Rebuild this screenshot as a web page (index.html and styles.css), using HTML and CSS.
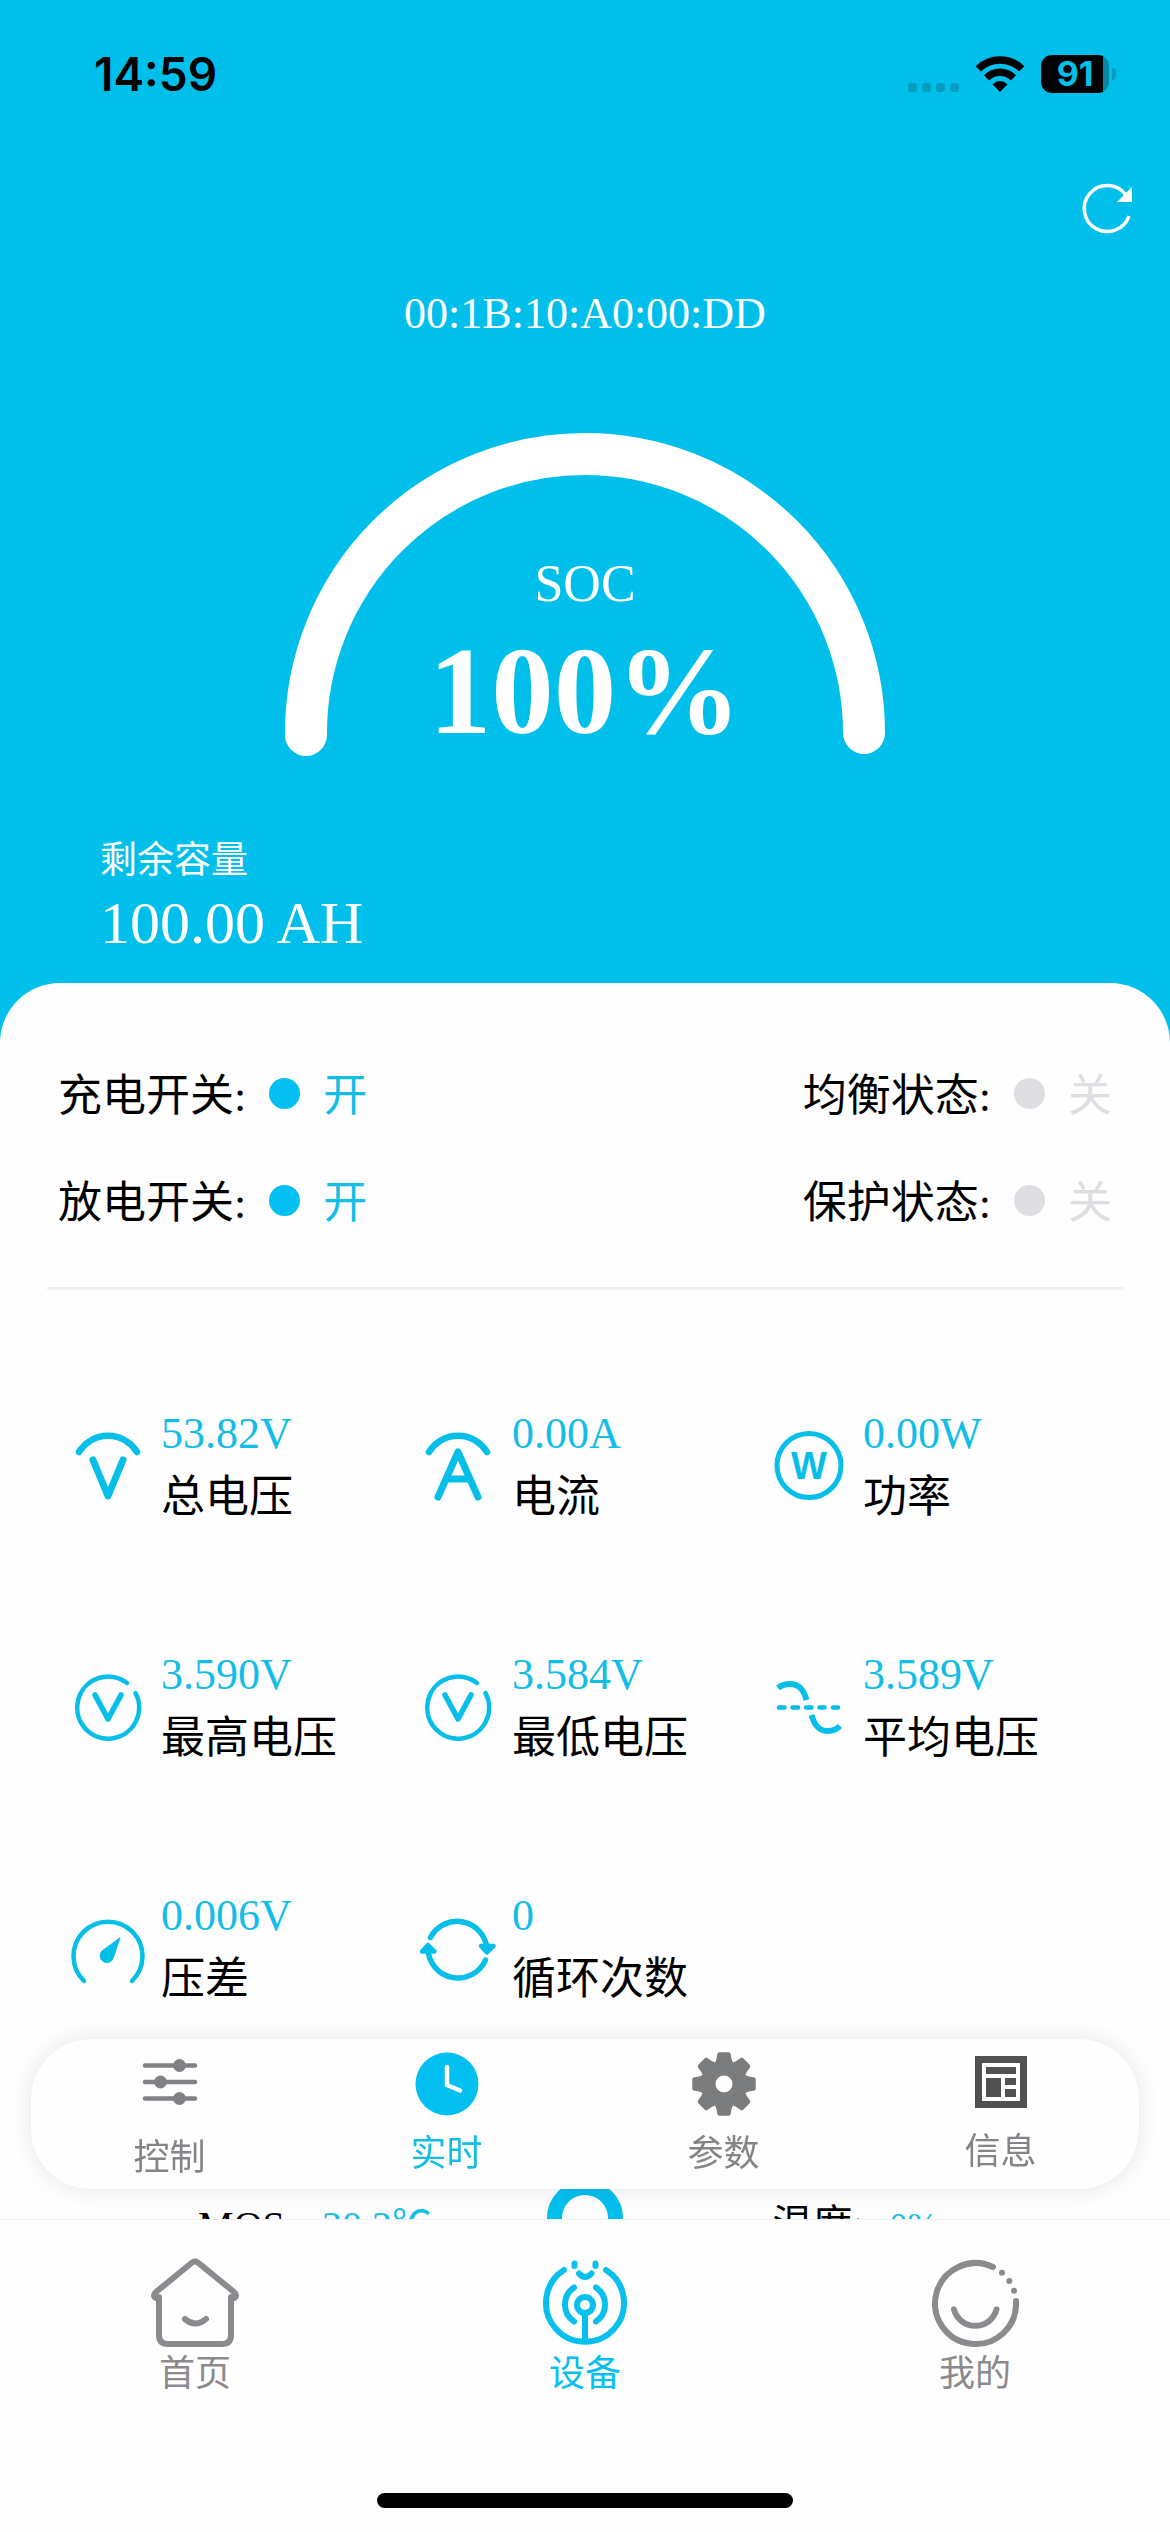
FILE: index.html
```html
<!DOCTYPE html>
<html lang="zh-CN">
<head>
<meta charset="utf-8">
<meta name="viewport" content="width=device-width, initial-scale=1">
<title>设备</title>
<link rel="stylesheet" href="styles.css">
</head>
<body>
<div class="app">
  <div class="screen">
    <main class="content">
      <header class="hero">
        <div class="statusbar">
          <span class="clock">14:59</span>
          <div class="status-icons">
            <svg class="signal" width="51" height="36" viewBox="0 0 51 36" aria-hidden="true">
              <g fill="#0a9bc2"><rect y="27" width="9" height="9" rx="3"/><rect x="14" y="27" width="9" height="9" rx="3"/><rect x="28" y="27" width="9" height="9" rx="3"/><rect x="42" y="27" width="9" height="9" rx="3"/></g>
            </svg>
            <svg width="48" height="36" viewBox="0 0 48 36" aria-hidden="true">
              <g fill="none" stroke="#000" stroke-width="7.4">
                <path d="M2.3 12.8A31 31 0 0 1 45.7 12.8"/>
                <path d="M10.6 21.8A19 19 0 0 1 37.4 21.8"/>
              </g>
              <path d="M24 36L16.5 28.3Q24 21.5 31.500 28.3Z"/>
            </svg>
            <div class="battery"><span>91</span></div>
          </div>
        </div>
        <button class="refresh" type="button" aria-label="刷新">
          <svg width="60" height="60" viewBox="0 0 60 60" aria-hidden="true">
            <path d="M51 39A23 23 0 1 1 47.500 17.500" fill="none" stroke="#fff" stroke-width="3.500"/>
            <path d="M54 10V25H39Z" fill="#fff"/>
          </svg>
        </button>
        <h1 class="device-id">00:1B:10:A0:00:DD</h1>
        <div class="gauge">
          <svg class="gauge-arc" width="602" height="329" viewBox="0 0 602 329" aria-hidden="true">
            <path d="M22 303V301A279 279 0 0 1 580 301" fill="none" stroke="#fff" stroke-width="42" stroke-linecap="round"/>
          </svg>
          <div class="gauge-text">
            <span class="gauge-label">SOC</span>
            <strong class="gauge-value">100%</strong>
          </div>
        </div>
        <div class="capacity">
          <span class="capacity-label">剩余容量</span>
          <span class="capacity-value">100.00 AH</span>
        </div>
      </header>

      <section class="sheet">
        <div class="switches">
          <div class="switch-row">
            <div class="switch on"><span class="name">充电开关:</span><i class="dot"></i><span class="state">开</span></div>
            <div class="switch"><span class="name">均衡状态:</span><i class="dot"></i><span class="state">关</span></div>
          </div>
          <div class="switch-row">
            <div class="switch on"><span class="name">放电开关:</span><i class="dot"></i><span class="state">开</span></div>
            <div class="switch"><span class="name">保护状态:</span><i class="dot"></i><span class="state">关</span></div>
          </div>
        </div>
        <hr class="divider">
        <div class="stats">
          <div class="stat">
            <svg class="stat-icon" viewBox="0 0 80 80" aria-hidden="true"><path d="M12 26A34 34 0 0 1 70 26" stroke-width="6.500"/><path d="M26 34L41 70L56 34" stroke-width="7"/></svg>
            <div class="stat-text"><span class="value">53.82V</span><span class="label">总电压</span></div>
          </div>
          <div class="stat">
            <svg class="stat-icon" viewBox="0 0 80 80" aria-hidden="true"><path d="M11 26A34 34 0 0 1 69 26" stroke-width="6.500"/><path d="M20 71L40 26L60 71M28 53H52" stroke-width="7"/></svg>
            <div class="stat-text"><span class="value">0.00A</span><span class="label">电流</span></div>
          </div>
          <div class="stat">
            <svg class="stat-icon" viewBox="0 0 80 80" aria-hidden="true"><circle cx="40" cy="39.500" r="32" stroke-width="5"/><text class="icon-letter" x="40" y="53" text-anchor="middle">W</text></svg>
            <div class="stat-text"><span class="value">0.00W</span><span class="label">功率</span></div>
          </div>
          <div class="stat">
            <svg class="stat-icon" viewBox="0 0 80 80" aria-hidden="true"><path d="M60 16A31 31 0 1 0 68.500 26" stroke-width="4.500"/><path d="M28 28L41 52L54 28" stroke-width="5.500"/></svg>
            <div class="stat-text"><span class="value">3.590V</span><span class="label">最高电压</span></div>
          </div>
          <div class="stat">
            <svg class="stat-icon" viewBox="0 0 80 80" aria-hidden="true"><path d="M59 16A31 31 0 1 0 67.500 26" stroke-width="4.500"/><path d="M27 28L40 52L53 28" stroke-width="5.500"/></svg>
            <div class="stat-text"><span class="value">3.584V</span><span class="label">最低电压</span></div>
          </div>
          <div class="stat">
            <svg class="stat-icon" viewBox="0 0 80 80" aria-hidden="true"><path class="flat" d="M9 21Q14 17 21 17C31 17 35 24 37.500 33M42.500 48C45 57 49 64 59 64Q66 64 71 59" stroke-width="6"/><path d="M10 40.500H15.500M23.500 40.500H29M37 40.500H42.500M50.500 40.500H55.500M64 40.500H69" stroke-width="4.500"/></svg>
            <div class="stat-text"><span class="value">3.589V</span><span class="label">平均电压</span></div>
          </div>
          <div class="stat">
            <svg class="stat-icon" viewBox="0 0 80 80" aria-hidden="true"><path d="M17 73A34.500 34.500 0 1 1 65 73" stroke-width="4.500"/><path class="solid" d="M53 30L46.500 49A6.800 6.800 0 1 1 34.500 43.500Z" stroke-width="1"/></svg>
            <div class="stat-text"><span class="value">0.006V</span><span class="label">压差</span></div>
          </div>
          <div class="stat">
            <svg class="stat-icon" viewBox="0 0 80 80" aria-hidden="true"><path d="M12.500 29.500A30 30 0 0 1 69 41M67.500 52A30 30 0 0 1 10 40" stroke-width="5.500"/><path class="solid" d="M63 38H75.500L69 44.500Z" stroke-width="4.500"/><path class="solid" d="M4 43.500L10 37L16.500 43.500Z" stroke-width="4.500"/></svg>
            <div class="stat-text"><span class="value">0</span><span class="label">循环次数</span></div>
          </div>
        </div>
        <div class="temps">
          <div class="temp"><span>MOS:</span><span class="temp-value">30.2℃</span></div>
          <svg width="76" height="76" viewBox="0 0 76 76" aria-hidden="true"><circle cx="38" cy="38" r="30.500" fill="none" stroke="#00c0eb" stroke-width="15"/></svg>
          <div class="temp"><span>温度:</span><span class="temp-value small">0%</span></div>
        </div>
      </section>
    </main>

    <nav class="tabs" aria-label="设备页面">
      <button class="tab" type="button">
        <svg width="64" height="68" viewBox="0 0 64 68" aria-hidden="true"><path d="M7 13.500H57M7 30H57M7 46.500H57" stroke="#828084" stroke-width="4.500" stroke-linecap="round"/><g fill="#828084"><circle cx="41.500" cy="13.500" r="6.400"/><circle cx="22.500" cy="30" r="6.400"/><circle cx="41.500" cy="46.500" r="6.400"/></g></svg>
        <span>控制</span>
      </button>
      <button class="tab active" type="button">
        <svg width="64" height="64" viewBox="0 0 64 64" aria-hidden="true"><circle cx="32" cy="32" r="31.500" fill="#04c0f0"/><path d="M32 15V33L45 38.500" fill="none" stroke="#fff" stroke-width="4.500" stroke-linecap="round" stroke-linejoin="round"/></svg>
        <span>实时</span>
      </button>
      <button class="tab" type="button">
        <svg width="64" height="64" viewBox="0 0 64 64" aria-hidden="true">
          <defs><path id="tooth" d="M-7 -20Q-5 -24 -4.500 -29.500H4.500Q5 -24 7 -20Z"/></defs>
          <g transform="translate(32 32)" fill="#7a7c7e" stroke="#7a7c7e" stroke-width="4.500" stroke-linejoin="round">
            <use href="#tooth"/><use href="#tooth" transform="rotate(45)"/><use href="#tooth" transform="rotate(90)"/><use href="#tooth" transform="rotate(135)"/><use href="#tooth" transform="rotate(180)"/><use href="#tooth" transform="rotate(225)"/><use href="#tooth" transform="rotate(270)"/><use href="#tooth" transform="rotate(315)"/>
            <circle r="15.500" fill="none" stroke-width="14"/>
          </g>
        </svg>
        <span>参数</span>
      </button>
      <button class="tab" type="button">
        <svg width="62" height="62" viewBox="0 0 62 62" aria-hidden="true"><rect x="5" y="4" width="52" height="52" fill="#525053"/><rect x="12" y="11" width="38" height="38" fill="#fff"/><g fill="#525053"><rect x="16" y="15" width="30" height="7"/><rect x="16" y="26" width="15" height="19"/><rect x="35" y="26" width="11" height="7"/><rect x="35" y="37" width="11" height="8"/></g></svg>
        <span>信息</span>
      </button>
    </nav>
  </div>

  <footer class="bottom">
    <nav class="bottom-nav" aria-label="主导航">
      <a class="nav-item" href="#home">
        <svg viewBox="0 0 96 96" aria-hidden="true"><path d="M12 43.500C6 43.500 6 39.500 9 37L44.500 8Q48 5 51.500 8L87 37C90 39.500 90 43.500 84 43.500"/><path d="M12 42V80Q12 89 21 89H75Q84 89 84 80V42"/><path d="M38 64Q48 73 59 64"/></svg>
        <span>首页</span>
      </a>
      <a class="nav-item active" href="#device">
        <svg viewBox="0 0 96 96" aria-hidden="true"><path d="M27 15A39 39 0 1 0 69 15"/><path d="M37.500 8.500V11M58.500 8.500V11M42 18.500Q48 25.500 54.500 18.500"/><path d="M37 32.500A20.500 20.500 0 0 0 37 66.500M59 32.500A20.500 20.500 0 0 1 59 66.500"/><circle cx="48" cy="50" r="8"/><path d="M48 58V86"/></svg>
        <span>设备</span>
      </a>
      <a class="nav-item" href="#mine">
        <svg viewBox="0 0 96 96" aria-hidden="true"><path d="M66 12A40.500 40.500 0 1 0 89 46"/><path d="M27 54.500A22 22 0 0 0 69.500 54.500"/><path d="M75 17.700h.01M82.300 26h.01M87 35.700h.01"/></svg>
        <span>我的</span>
      </a>
    </nav>
    <div class="home-indicator"></div>
  </footer>
</div>
</body>
</html>
```
FILE: styles.css
```css
:root {
  --cyan: #00c0eb;
  --cyan-text: #12bde6;
  --gray: #858387;
  --light: #dedde1;
}

* {
  box-sizing: border-box;
}

body {
  margin: 0;
  background: #fefefe;
  color: #000;
  font-family: "Liberation Serif", "Noto Sans CJK SC", serif;
}

button {
  margin: 0;
  padding: 0;
  border: 0;
  background: none;
  font: inherit;
  color: inherit;
}

svg {
  display: block;
}

.app {
  display: flex;
  flex-direction: column;
  height: 100vh;
}

.screen {
  position: relative;
  flex: 1;
  min-height: 0;
}

.content {
  height: 100%;
  overflow-y: auto;
  scrollbar-width: none;
  background: var(--cyan);
}

/* Header */
.hero {
  display: flex;
  flex-direction: column;
  align-items: center;
  padding-bottom: 26px;
  color: #fff;
}

.statusbar {
  align-self: stretch;
  display: flex;
  justify-content: space-between;
  align-items: center;
  height: 148px;
  padding: 0 54px 0 94px;
  color: #000;
  font-family: Inter, sans-serif;
}

.clock {
  font-size: 46px;
  font-weight: 600;
}

.status-icons {
  display: flex;
  align-items: center;
  gap: 17px;
}

.battery {
  position: relative;
  width: 68px;
  height: 38px;
  margin-right: 7px;
  border-radius: 11px;
  background: linear-gradient(to right, #000 62px, #0a86a5 62px);
  color: var(--cyan);
  font-size: 34px;
  font-weight: 700;
  line-height: 38px;
  text-align: center;
}

.battery::after {
  content: "";
  position: absolute;
  left: 71px;
  top: 13px;
  width: 4px;
  height: 12px;
  border-radius: 0 4px 4px 0;
  background: #0a9bc2;
}

.refresh {
  align-self: flex-end;
  margin: 29px 32px 52px;
}

.device-id {
  margin: 0;
  font-size: 44px;
  font-weight: 400;
  line-height: 50px;
}

.gauge {
  display: grid;
  justify-items: center;
  align-items: end;
  margin-top: 93px;
}

.gauge-arc,
.gauge-text {
  grid-area: 1 / 1;
}

.gauge-text {
  display: flex;
  flex-direction: column;
  align-items: center;
  gap: 7px;
}

.gauge-label {
  font-size: 52px;
  line-height: 60px;
}

.gauge-value {
  font-size: 125px;
  line-height: 140px;
}

.capacity {
  align-self: flex-start;
  display: flex;
  flex-direction: column;
  gap: 4px;
  margin: 75px 100px 0;
}

.capacity-label {
  font-size: 37px;
  line-height: 50px;
}

.capacity-value {
  font-size: 60px;
  line-height: 67px;
}

/* Sheet */
.sheet {
  padding: 84px 0 240px;
  border-radius: 60px 60px 0 0;
  background: #fefefe;
  font-size: 44px;
}

.switches {
  display: flex;
  flex-direction: column;
  gap: 47px;
  padding: 0 58px;
  line-height: 60px;
}

.switch-row {
  display: flex;
  justify-content: space-between;
}

.switch {
  display: flex;
  align-items: center;
  gap: 23px;
}

.dot {
  width: 31px;
  height: 31px;
  margin-bottom: 8px;
  border-radius: 50%;
  background: var(--light);
}

.state {
  color: var(--light);
}

.on .dot {
  background: #04c0f2;
}

.on .state {
  color: var(--cyan-text);
}

.divider {
  height: 3px;
  margin: 53px 47px 0;
  border: 0;
  background: #efeef2;
}

.stats {
  display: grid;
  grid-template-columns: repeat(3, 30%);
  row-gap: 115px;
  padding-top: 113px;
}

.stat {
  display: flex;
  align-items: center;
  gap: 14px;
  padding-left: 67px;
}

.stat-icon {
  flex: none;
  width: 80px;
  height: 80px;
  fill: none;
  stroke: #06bfe9;
  stroke-linecap: round;
  stroke-linejoin: round;
}

.stat-icon .flat {
  stroke-linecap: butt;
}

.stat-icon .solid {
  fill: #06bfe9;
}

.icon-letter {
  fill: #06bfe9;
  stroke: none;
  font: 700 38px "Liberation Sans", sans-serif;
}

.stat-text {
  display: flex;
  flex-direction: column;
  gap: 2px;
  line-height: 62px;
  white-space: nowrap;
}

.value {
  color: var(--cyan-text);
}

.temps {
  display: grid;
  grid-template-columns: 1fr auto 1fr;
  align-items: end;
  margin-top: 169px;
  padding: 0 83px;
  font-size: 40px;
  line-height: 60px;
}

.temp {
  display: flex;
  justify-content: center;
  align-items: baseline;
  gap: 26px;
}

.temp-value {
  color: var(--cyan-text);
}

.temp-value.small {
  font-size: 36px;
}

/* Floating tab bar over the scrolled content */
.tabs {
  position: absolute;
  left: 31px;
  right: 31px;
  bottom: 30px;
  display: grid;
  grid-template-columns: repeat(4, 1fr);
  height: 150px;
  padding-top: 13px;
  border-radius: 60px;
  background: #fefefe;
  box-shadow: 0 0 20px rgba(90, 70, 110, 0.15);
}

.tab {
  display: flex;
  flex-direction: column;
  align-items: center;
  gap: 18px;
  color: var(--gray);
  font-size: 36px;
  line-height: 40px;
}

.tab.active {
  color: var(--cyan-text);
}

/* Bottom navigation */
.bottom {
  padding-bottom: 24px;
  border-top: 1px solid #f2f1f5;
  background: #fefefe;
}

.bottom-nav {
  display: grid;
  grid-template-columns: repeat(3, 1fr);
  padding-top: 35px;
}

.nav-item {
  display: flex;
  flex-direction: column;
  align-items: center;
  gap: 3px;
  color: #8c8a8e;
  font-size: 36px;
  line-height: 40px;
  text-decoration: none;
}

.nav-item.active {
  color: #08c0ee;
}

.nav-item svg {
  width: 96px;
  height: 96px;
  fill: none;
  stroke: currentColor;
  stroke-width: 6px;
  stroke-linecap: round;
  stroke-linejoin: round;
}

.home-indicator {
  width: 416px;
  height: 15px;
  margin: 99px auto 0;
  border-radius: 8px;
  background: #000;
}
```
